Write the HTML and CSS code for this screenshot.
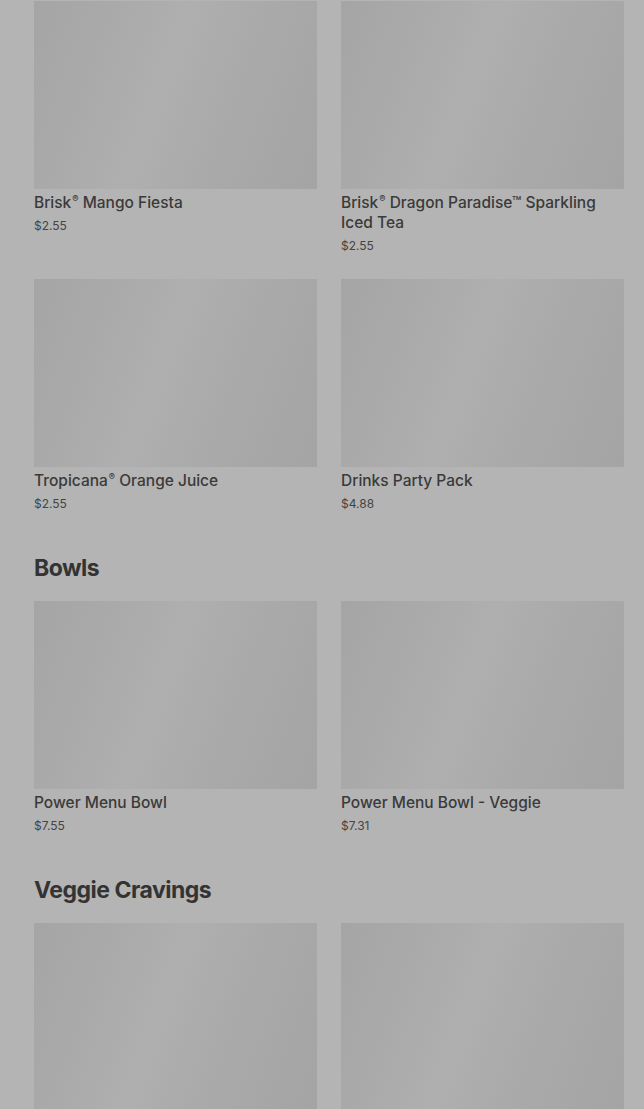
FILE: index.html
```html
<!DOCTYPE html>
<html>
<head>
<meta charset="utf-8">
<link rel="stylesheet" href="styles.css">
</head>
<body>
<main class="menu">
  <section class="section first">
    <div class="grid">
      <article class="card"><div class="thumb"></div><h3 class="name">Brisk<sup class="reg">®</sup> Mango Fiesta</h3><p class="price">$2.55</p></article>
      <article class="card"><div class="thumb"></div><h3 class="name">Brisk<sup class="reg">®</sup> Dragon Paradise™ Sparkling Iced Tea</h3><p class="price">$2.55</p></article>
      <article class="card"><div class="thumb"></div><h3 class="name">Tropicana<sup class="reg">®</sup> Orange Juice</h3><p class="price">$2.55</p></article>
      <article class="card"><div class="thumb"></div><h3 class="name">Drinks Party Pack</h3><p class="price">$4.88</p></article>
    </div>
  </section>
  <section class="section">
    <h2 class="heading">Bowls</h2>
    <div class="grid">
      <article class="card"><div class="thumb"></div><h3 class="name">Power Menu Bowl</h3><p class="price">$7.55</p></article>
      <article class="card"><div class="thumb"></div><h3 class="name">Power Menu Bowl - Veggie</h3><p class="price">$7.31</p></article>
    </div>
  </section>
  <section class="section">
    <h2 class="heading">Veggie Cravings</h2>
    <div class="grid">
      <article class="card"><div class="thumb"></div></article>
      <article class="card"><div class="thumb"></div></article>
    </div>
  </section>
</main>
</body>
</html>
```

FILE: styles.css
```css
html, body {
  margin: 0;
  padding: 0;
  background: #b4b4b4;
  overflow: hidden;
}
body {
  font-family: "Inter", "Liberation Sans", sans-serif;
  color: #383838;
}
.menu {
  padding: 1px 20px 0 34px;
}
.section {
  margin-top: 39px;
}
.section.first {
  margin-top: 0;
}
.heading {
  margin: 0 0 17px;
  font-size: 23px;
  line-height: 32px;
  font-weight: 700;
  letter-spacing: -0.5px;
  color: #333;
}
.grid {
  display: grid;
  grid-template-columns: 1fr 1fr;
  column-gap: 24px;
  row-gap: 24px;
}
.card {
  display: flex;
  flex-direction: column;
}
.thumb {
  height: 188px;
  background: linear-gradient(110deg, #a5a5a5 0%, #aaaaaa 25%, #afafaf 45%, #aaaaaa 65%, #a4a4a4 100%);
}
.name {
  margin: 4px 0 0;
  font-size: 15.5px;
  line-height: 20px;
  font-weight: 500;
  color: #3a3a3a;
}
.reg {
  font-size: 0.6em;
  line-height: 1;
  vertical-align: super;
  margin-left: 1px;
}
.price {
  margin: 4px 0 0;
  font-size: 12px;
  line-height: 18px;
  color: #444;
}
```
